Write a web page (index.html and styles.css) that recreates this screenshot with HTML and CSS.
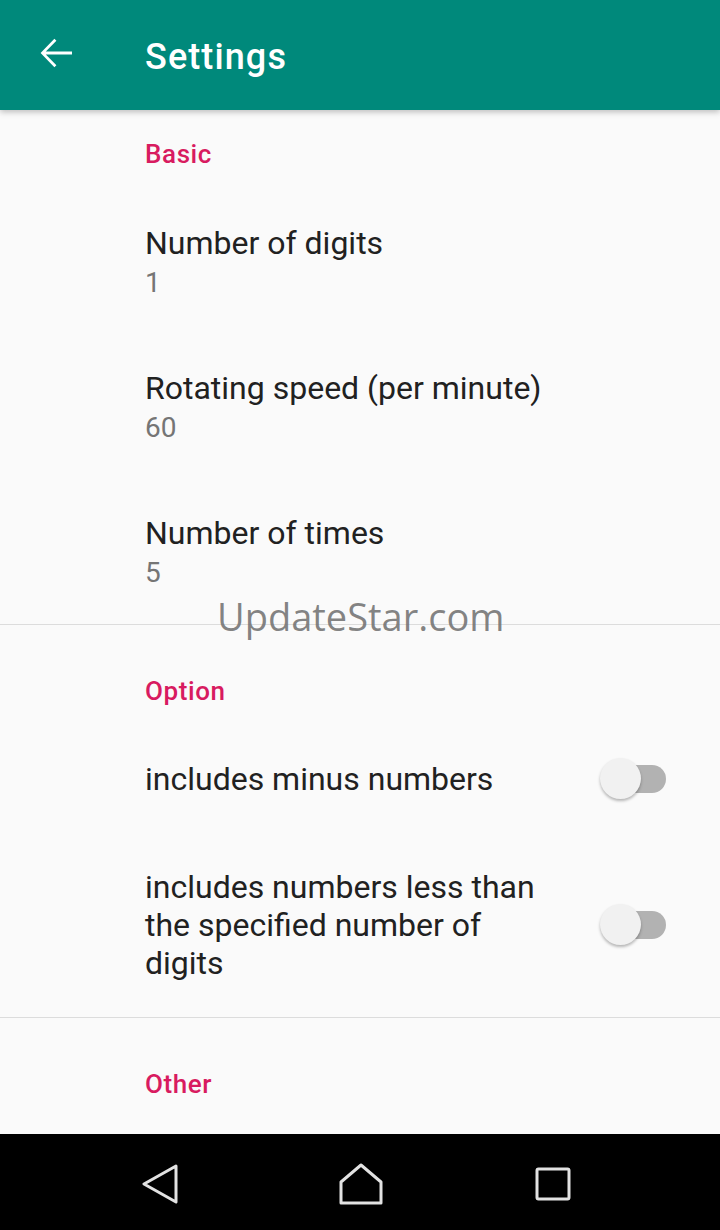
FILE: index.html
```html
<!DOCTYPE html>
<html lang="en">
<head>
  <meta charset="UTF-8">
  <meta name="viewport" content="width=device-width, initial-scale=1.0">
  <title>Settings</title>
  <link rel="stylesheet" href="styles.css">
</head>
<body>

  <div class="screen">
    <header class="appbar">
      <svg class="back" viewBox="0 0 24 24" width="48" height="48">
        <path d="M20 11.2H6.9l5.3-5.3-1-1L4.3 12l6.9 7.1 1-1-5.3-5.3H20z" fill="#fff"/>
      </svg>
      <h1>Settings</h1>
    </header>

    <main class="prefs">
      <section class="group">
        <h2 class="category">Basic</h2>
        <div class="item">
          <div class="title">Number of digits</div>
          <div class="summary">1</div>
        </div>
        <div class="item">
          <div class="title">Rotating speed (per minute)</div>
          <div class="summary">60</div>
        </div>
        <div class="item">
          <div class="title">Number of times</div>
          <div class="summary">5</div>
        </div>
      </section>

      <section class="group">
        <h2 class="category">Option</h2>
        <div class="item toggle">
          <div class="title">includes minus numbers</div>
          <div class="switch"><span class="thumb"></span></div>
        </div>
        <div class="item toggle">
          <div class="title">includes numbers less than the specified number of digits</div>
          <div class="switch"><span class="thumb"></span></div>
        </div>
      </section>

      <section class="group">
        <h2 class="category">Other</h2>
      </section>

      <div class="watermark">UpdateStar.com</div>
    </main>

    <nav class="navbar">
      <svg class="nav-back" width="40" height="40" viewBox="0 0 40 40">
        <path d="M36 2 L4 20 L36 38 Z" fill="none" stroke="#e2e2e2" stroke-width="3" stroke-linejoin="round"/>
      </svg>
      <svg class="nav-home" width="46" height="42" viewBox="0 0 46 42">
        <path d="M23 2 L43 19 V40 H3 V19 Z" fill="none" stroke="#e2e2e2" stroke-width="3" stroke-linejoin="round"/>
      </svg>
      <svg class="nav-recent" width="36" height="34" viewBox="0 0 36 34">
        <rect x="2" y="2" width="32" height="30" rx="1.5" fill="none" stroke="#e2e2e2" stroke-width="3"/>
      </svg>
    </nav>
  </div>

</body>
</html>
```

FILE: styles.css
```css
html, body {
  margin: 0;
  padding: 0;
}
body {
  font-family: Roboto, "Noto Sans", sans-serif;
  background-color: #fafafa;
}
.screen {
  width: 720px;
  height: 1230px;
  display: flex;
  flex-direction: column;
  overflow: hidden;
}
.appbar {
  height: 110px;
  flex: none;
  display: flex;
  align-items: center;
  background-color: #00897b;
  box-shadow: 0 2px 6px rgba(0, 0, 0, 0.25);
  position: relative;
  z-index: 1;
}
.back {
  margin-left: 32px;
  margin-top: -4px;
}
.appbar h1 {
  margin: 4px 0 0 65px;
  color: #fff;
  font-size: 36px;
  font-weight: 500;
  letter-spacing: 1.1px;
}
.prefs {
  flex: 1;
  position: relative;
  overflow: hidden;
}
.group {
  border-bottom: 1px solid #dcdcdc;
}
.group:last-of-type {
  border-bottom: none;
}
.category {
  margin: 0;
  padding: 29px 0 22px 145px;
  font-size: 26px;
  line-height: 30px;
  font-weight: 500;
  letter-spacing: 0.6px;
  color: #d81b60;
}
.group + .group .category {
  padding-top: 51px;
  padding-bottom: 19px;
}
.item {
  padding: 32px 0 33px 145px;
}
.item:last-child {
  padding-bottom: 31px;
}
.title {
  font-size: 32px;
  line-height: 40px;
  color: #212121;
}
.summary {
  font-size: 28px;
  line-height: 40px;
  color: #757575;
}
.toggle {
  display: flex;
  align-items: center;
  padding: 35px 53px 35px 145px;
}
.toggle:last-child {
  padding-bottom: 35px;
}
.toggle .title {
  flex: 1;
  line-height: 38px;
  margin-right: 52px;
}
.switch {
  width: 67px;
  height: 38px;
  position: relative;
  flex: none;
}
.switch::before {
  content: "";
  position: absolute;
  left: 10px;
  right: 1px;
  top: 5px;
  height: 28px;
  border-radius: 14px;
  background-color: #b2b2b2;
}
.thumb {
  position: absolute;
  left: 0;
  top: -2px;
  width: 41px;
  height: 41px;
  border-radius: 50%;
  background-color: #f1f1f1;
  box-shadow: 0 2px 3px rgba(0, 0, 0, 0.28);
}
.watermark {
  position: absolute;
  left: 217px;
  top: 480px;
  font-family: "Open Sans", sans-serif;
  font-size: 38px;
  color: rgba(110, 110, 110, 0.85);
}
.navbar {
  height: 96px;
  flex: none;
  background-color: #000;
  display: flex;
  align-items: center;
  padding: 4px 0 0 140px;
  box-sizing: border-box;
}
.nav-home {
  margin-left: 158px;
}
.nav-recent {
  margin-left: 151px;
}
```
